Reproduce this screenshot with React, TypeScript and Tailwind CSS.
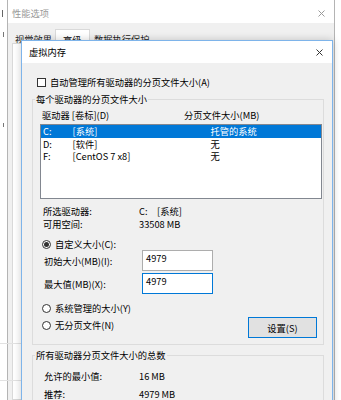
import React from "react";

function XIcon({ color }: { color: string }) {
  return (
    <svg width="7" height="7" viewBox="0 0 7 7" className="block">
      <path d="M0.5 0.5 L6.5 6.5 M6.5 0.5 L0.5 6.5" stroke={color} strokeWidth="1" fill="none" />
    </svg>
  );
}

function Radio({ checked }: { checked?: boolean }) {
  return (
    <span className="flex items-center justify-center w-[9px] h-[9px] rounded-full border border-[#333] bg-white shrink-0">
      {checked ? <span className="w-[5px] h-[5px] rounded-full bg-[#333]" /> : null}
    </span>
  );
}

export default function App() {
  const rows = [
    { d: "C:", l: "[系统]", s: "托管的系统", sel: true },
    { d: "D:", l: "[软件]", s: "无", sel: false },
    { d: "F:", l: "[CentOS 7 x8]", s: "无", sel: false },
  ];
  return (
    <div className="relative w-[341px] h-[400px] overflow-hidden bg-white text-[9.25px] leading-[12px] text-black font-['Noto_Sans_CJK_SC',sans-serif]">
      {/* background window fragments */}
      <div className="absolute left-[2px] top-[10px] w-[1px] h-[7px] bg-[#666]" />
      <div className="absolute left-[3px] top-[32px] w-[1px] h-[5px] bg-[#777]" />
      <div className="absolute left-[3px] top-[123px] w-[1px] h-[4px] bg-[#777]" />

      {/* outer window */}
      <div className="absolute left-[7px] top-0 w-[328px] h-[400px] border-x border-[#b4b4b4] bg-[#f0f0f0] flex flex-col">
        <div className="h-[23px] bg-white flex items-center justify-between pl-[4px] pr-[9px] pt-[3px] text-[#999]">
          <span>性能选项</span>
          <XIcon color="#9a9a9a" />
        </div>
        <div className="flex pl-[4px] pt-[6px]">
          <div className="w-[43px] h-[14px] pt-[4px] pl-[3px] text-[#222]">视觉效果</div>
          <div className="w-[35px] h-[14px] pt-[4px] pl-[7px] bg-white border-x border-t border-[#d9d9d9]">高级</div>
          <div className="h-[14px] pt-[4px] pl-[4px] text-[#222]">数据执行保护</div>
        </div>
        <div className="flex-1 ml-[4px] mr-[4px] bg-white border border-[#d9d9d9]" />
      </div>

      <div className="absolute left-0 top-[343px] w-[21px] h-[1px] bg-[#e2e2e2]" />
      <div className="absolute left-0 top-[380px] w-[21px] h-[1px] bg-[#e2e2e2]" />

      {/* inner dialog */}
      <div className="absolute left-[21px] top-[40px] w-[312px] h-[380px] border border-[#7eb4ea] bg-[#f0f0f0] shadow-[0_0_8px_rgba(0,0,0,0.2)] flex flex-col">
        <div className="h-[22px] bg-white flex items-center justify-between pl-[7px] pr-[9px]">
          <span>虚拟内存</span>
          <XIcon color="#333" />
        </div>
        <div className="flex flex-col pl-[10px] pr-[8px] pt-[13px]">
          <div className="flex items-center h-[12px] pl-[5px]">
            <span className="w-[9px] h-[9px] border border-[#333] bg-white shrink-0" />
            <span className="ml-[4px]">自动管理所有驱动器的分页文件大小(A)</span>
          </div>

          <fieldset className="mt-[5px] border border-[#dcdcdc] pb-[6px] flex flex-col">
            <legend className="ml-[2px] px-[1px] leading-[12px]">每个驱动器的分页文件大小</legend>
            <div className="flex items-center h-[12px] mt-[4px] pl-[9px]">
              <span className="w-[142px]">驱动器 [卷标](D)</span>
              <span>分页文件大小(MB)</span>
            </div>
            <div className="mt-[3px] ml-[7px] mr-[1px] h-[75px] border border-[#828790] bg-white flex flex-col">
              {rows.map((r) => (
                <div
                  key={r.d}
                  className={
                    "flex items-center h-[12.5px] pl-[2px] " +
                    (r.sel ? "bg-[#0078d7] text-white" : "")
                  }
                >
                  <span className="w-[29.5px]">{r.d}</span>
                  <span className="w-[138px]">{r.l}</span>
                  <span>{r.s}</span>
                </div>
              ))}
            </div>
            <div className="flex flex-col mt-[5px] pl-[10px]">
              <div className="flex items-center h-[13px]">
                <span className="w-[96px]">所选驱动器:</span>
                <span className="w-[18px]">C:</span>
                <span>[系统]</span>
              </div>
              <div className="flex items-center h-[13px]">
                <span className="w-[96px]">可用空间:</span>
                <span>33508 MB</span>
              </div>
            </div>
            <div className="flex items-center h-[12px] mt-[8px] pl-[9px]">
              <Radio checked />
              <span className="ml-[4px]">自定义大小(C):</span>
            </div>
            <div className="flex items-center h-[21px] pl-[11px]">
              <span className="w-[98px]">初始大小(MB)(I):</span>
              <div className="w-[71px] h-[21px] border border-[#adadad] bg-white pl-[3px] pt-[1px]">4979</div>
            </div>
            <div className="flex items-center h-[21px] mt-[2px] pl-[11px]">
              <span className="w-[98px]">最大值(MB)(X):</span>
              <div className="w-[71px] h-[21px] border border-[#0078d7] bg-white pl-[3px] pt-[1px]">4979</div>
            </div>
            <div className="flex items-center h-[12px] mt-[8px] pl-[9px]">
              <Radio />
              <span className="ml-[4px]">系统管理的大小(Y)</span>
            </div>
            <div className="flex items-start justify-between mt-[3px] pr-[6px]">
              <div className="flex items-center h-[12px] mt-[2px] pl-[9px]">
                <Radio />
                <span className="ml-[4px]">无分页文件(N)</span>
              </div>
              <div className="w-[69px] h-[21px] border border-[#0078d7] bg-[#e1e1e1] flex items-center justify-center">
                设置(S)
              </div>
            </div>
          </fieldset>

          <fieldset className="mt-[4px] border border-[#dcdcdc] pb-[10px] flex flex-col">
            <legend className="ml-[2px] px-[1px] leading-[12px]">所有驱动器分页文件大小的总数</legend>
            <div className="flex flex-col mt-[8px] pl-[11px] gap-[5px]">
              <div className="flex items-center h-[13px]">
                <span className="w-[95px]">允许的最小值:</span>
                <span>16 MB</span>
              </div>
              <div className="flex items-center h-[13px]">
                <span className="w-[95px]">推荐:</span>
                <span>4979 MB</span>
              </div>
            </div>
          </fieldset>
        </div>
      </div>
    </div>
  );
}
